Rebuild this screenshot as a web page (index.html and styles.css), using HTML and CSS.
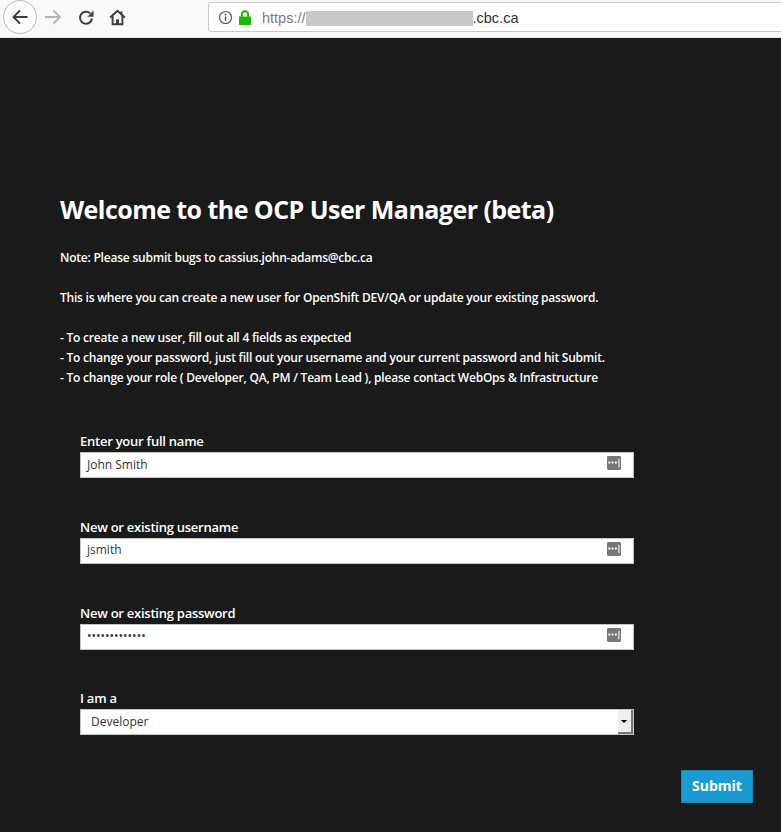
FILE: index.html
```html
<!DOCTYPE html>
<html lang="en">
<head>
<meta charset="utf-8">
<title>OCP User Manager</title>
<link rel="stylesheet" href="styles.css">
</head>
<body>
<header class="toolbar">
  <span class="back">
    <svg width="20" height="20" viewBox="0 0 20 20"><path d="M17.5 10H3.5M10 3.5L3.5 10l6.5 6.5" fill="none" stroke="#3d3d3d" stroke-width="1.9"/></svg>
  </span>
  <svg class="tool forward" width="18" height="18" viewBox="0 0 18 18"><path d="M1 9h15M9.5 2.5L16 9l-6.5 6.5" fill="none" stroke="#b4b4b4" stroke-width="1.8"/></svg>
  <svg class="tool reload" width="17" height="17" viewBox="0 0 17 17"><path d="M14 9.5A6 6 0 1 1 12.2 4.4" fill="none" stroke="#3d3d3d" stroke-width="2"/><path d="M15.5 1.5v6.2H9.3z" fill="#3d3d3d"/></svg>
  <svg class="tool home" width="17" height="17" viewBox="0 0 18 18"><path d="M1.2 9L9 1.8 16.8 9M3.8 7.5v8.7h10.4V7.5" fill="none" stroke="#3d3d3d" stroke-width="2"/><path d="M7.4 16v-5h3.2v5z" fill="#3d3d3d"/><path d="M12.2 2.5h2v3h-2z" fill="#3d3d3d"/></svg>
  <div class="urlbar">
    <svg class="info" width="15" height="15" viewBox="0 0 15 15"><circle cx="7.5" cy="7.5" r="6" fill="none" stroke="#555" stroke-width="1.2"/><path d="M7.5 6.6v4.2" stroke="#555" stroke-width="1.5"/><circle cx="7.5" cy="4.5" r="1" fill="#555"/></svg>
    <svg class="lock" width="14" height="15" viewBox="0 0 14 15"><path d="M1 6.5h12V15H1z" fill="#12bc00"/><path d="M3.8 7V4.5a3.2 3.2 0 0 1 6.4 0V7" fill="none" stroke="#12bc00" stroke-width="2"/></svg>
    <span class="scheme">https://</span><span class="redacted"></span><span class="domain">.cbc.ca</span>
  </div>
</header>
<main class="page">
  <h1 class="title">Welcome to the OCP User Manager (beta)</h1>
  <p class="note">Note: Please submit bugs to cassius.john-adams@cbc.ca</p>
  <p class="note">This is where you can create a new user for OpenShift DEV/QA or update your existing password.</p>
  <p class="note">- To create a new user, fill out all 4 fields as expected<br>- To change your password, just fill out your username and your current password and hit Submit.<br>- To change your role ( Developer, QA, PM / Team Lead ), please contact WebOps &amp; Infrastructure</p>
  <form class="form">
    <div class="field">
      <label class="label">Enter your full name</label>
      <div class="input"><span class="text">John Smith</span><svg class="key" width="14" height="14" viewBox="0 0 15 15"><rect width="15" height="15" rx="1.5" fill="#777"/><path d="M1.5 6h2v2h-2zM5 6h2v2H5zM8.5 6h2v2h-2z" fill="#fff"/><path d="M12 3h1.5v9H12z" fill="#ddd"/></svg></div>
    </div>
    <div class="field">
      <label class="label">New or existing username</label>
      <div class="input"><span class="text">jsmith</span><svg class="key" width="14" height="14" viewBox="0 0 15 15"><rect width="15" height="15" rx="1.5" fill="#777"/><path d="M1.5 6h2v2h-2zM5 6h2v2H5zM8.5 6h2v2h-2z" fill="#fff"/><path d="M12 3h1.5v9H12z" fill="#ddd"/></svg></div>
    </div>
    <div class="field">
      <label class="label">New or existing password</label>
      <div class="input"><span class="text">•••••••••••••</span><svg class="key" width="14" height="14" viewBox="0 0 15 15"><rect width="15" height="15" rx="1.5" fill="#777"/><path d="M1.5 6h2v2h-2zM5 6h2v2H5zM8.5 6h2v2h-2z" fill="#fff"/><path d="M12 3h1.5v9H12z" fill="#ddd"/></svg></div>
    </div>
    <div class="field">
      <label class="label">I am a</label>
      <div class="input select"><span class="text">Developer</span><span class="arrow"></span></div>
    </div>
    <div class="actions"><button class="submit" type="button">Submit</button></div>
  </form>
</main>
</body>
</html>
```
FILE: styles.css
```css
* { box-sizing: border-box; }
html, body { margin: 0; height: 100%; }
body { background: #1a1a1a; font-family: "Open Sans", sans-serif; color: #fff; width: 781px; height: 832px; overflow: hidden; }
.toolbar { height: 38px; background: #f9f9f9; display: flex; align-items: center; border-bottom: 1px solid #e4e4e4; padding: 0 0 3px 3px; }
.back { width: 34px; height: 34px; border-radius: 50%; border: 1px solid #b8b8b8; background: #fbfbfb; display: flex; align-items: center; justify-content: center; flex: none; }
.tool { flex: none; }
.forward { margin-left: 7px; }
.reload { margin-left: 16px; }
.home { margin-left: 14px; }
.urlbar { margin-left: 82px; width: 600px; height: 30px; background: #fff; border: 1px solid #c8c8c8; border-right: 0; border-radius: 4px 0 0 4px; display: flex; align-items: center; padding-left: 9px; font-family: "Liberation Sans", sans-serif; font-size: 14.5px; flex: none; }
.lock { margin-left: 5px; }
.scheme { color: #7d7d7d; margin-left: 10px; padding-top: 2px; }
.redacted { width: 167px; height: 15px; margin-top: 3px; background: #c8c8c8; filter: blur(0.5px); }
.domain { color: #2f2f2f; padding-top: 2px; }
.page { padding: 0 0 0 60px; }
.title { font-size: 25px; line-height: 34px; font-weight: 700; letter-spacing: -0.55px; margin: 154px 0 0; }
.note { font-size: 12px; font-weight: 600; line-height: 20px; letter-spacing: -0.22px; margin: 20px 0 0; }
.title + .note { margin-top: 22px; }
.form { padding-left: 20px; margin-top: 44px; width: 693px; }
.field { width: 554px; height: 85.75px; }
.label { display: block; font-size: 13px; font-weight: 600; letter-spacing: -0.25px; line-height: 18px; height: 20px; }
.input { height: 26px; background: #fff; border: 1px solid #c4c4c4; color: #333; font-size: 12px; display: flex; align-items: center; justify-content: space-between; padding: 0 12px 0 6px; }
.text { margin-top: -2px; }
.key { margin-bottom: 4px; }
.select { padding: 0 0 0 10px; }
.arrow { width: 15px; height: 24px; background: #efefef; border-right: 2px solid #777; border-bottom: 2px solid #777; position: relative; }
.arrow::after { content: ""; position: absolute; left: 3px; top: 10px; border: 3px solid transparent; border-top-color: #000; }
.actions { display: flex; justify-content: flex-end; margin-top: -5px; }
.submit { width: 72px; height: 33px; background: #1b9bd3; border: 1px solid #1a86b6; color: #fff; font-family: "Open Sans", sans-serif; font-weight: 700; font-size: 14px; padding: 0 0 2px; }
```
